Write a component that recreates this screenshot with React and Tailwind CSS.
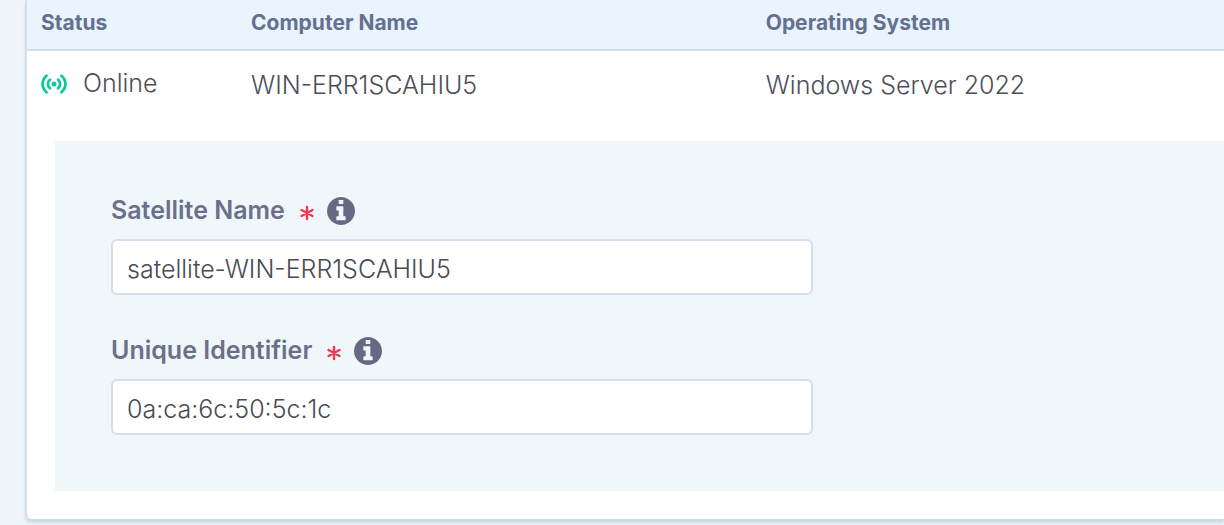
import { useState } from 'react'

const satellite = {
  status: 'Online',
  computerName: 'WIN-ERR1SCAHIU5',
  os: 'Windows Server 2022',
}

function OnlineIcon() {
  return (
    <svg
      viewBox="0 0 26 20"
      className="h-5 w-[26px] shrink-0 text-[#10c99a]"
      fill="none"
      stroke="currentColor"
      strokeWidth="2.8"
      strokeLinecap="round"
      aria-hidden="true"
    >
      <path d="M5.5 1.8C.3 6.4.3 13.6 5.5 18.2" />
      <path d="M8.9 5.8C6.2 8.4 6.2 11.6 8.9 14.2" />
      <path d="M17.1 5.8c2.7 2.6 2.7 5.8 0 8.4" />
      <path d="M20.5 1.8c5.2 4.6 5.2 11.8 0 16.4" />
      <circle cx="13" cy="10" r="2.5" fill="currentColor" stroke="none" />
    </svg>
  )
}

function InfoIcon() {
  return (
    <svg viewBox="128 128 1536 1536" className="ml-3 size-7 text-[#646a84]" fill="currentColor" aria-hidden="true">
      <path d="M1152 1376v-160q0-14-9-23t-23-9h-96v-512q0-14-9-23t-23-9h-320q-14 0-23 9t-9 23v160q0 14 9 23t23 9h96v320h-96q-14 0-23 9t-9 23v160q0 14 9 23t23 9h448q14 0 23-9t9-23zm-128-896v-160q0-14-9-23t-23-9h-192q-14 0-23 9t-9 23v160q0 14 9 23t23 9h192q14 0 23-9t9-23zm640 416q0 209-103 385.5t-279.5 279.5-385.5 103-385.5-103-279.5-279.5-103-385.5 103-385.5 279.5-279.5 385.5-103 385.5 103 279.5 279.5 103 385.5z" />
    </svg>
  )
}

function RequiredMark() {
  return (
    <svg
      viewBox="0 0 16 16"
      className="mt-1 size-4 text-[#f5364f]"
      stroke="currentColor"
      strokeWidth="2.4"
      strokeLinecap="round"
      role="img"
      aria-label="required"
    >
      <path d="M8 2v12M2.5 5l11 6M13.5 5L2.5 11" />
    </svg>
  )
}

function Field({ id, label, value, onChange }) {
  return (
    <div>
      <div className="flex h-7 items-center">
        <label htmlFor={id} className="flex items-center gap-3.5 text-[25px] font-semibold text-[#6b7089]">
          {label}
          <RequiredMark />
        </label>
        <InfoIcon />
      </div>
      <input
        id={id}
        type="text"
        required
        value={value}
        onChange={(e) => onChange(e.target.value)}
        className="mt-3.5 block h-14 w-full max-w-[702px] rounded-md border-2 border-[#d5deea] bg-white px-3.5 pt-1 text-[25px] font-light text-[#484b52] outline-none"
      />
    </div>
  )
}

function App() {
  const [name, setName] = useState('satellite-WIN-ERR1SCAHIU5')
  const [identifier, setIdentifier] = useState('0a:ca:6c:50:5c:1c')

  return (
    <div className="overflow-hidden bg-[#f0f5fb] pb-1.5 pl-[25px] font-['Inter',sans-serif]">
      <div className="rounded-bl-md border-l-2 border-[#d3e0ec] bg-white pb-7 shadow-[0_4px_3px_#c9dbe3]">
        <table className="w-full table-fixed text-left">
          <thead>
            <tr className="h-[50px] border-b-2 border-[#d3e0ec] bg-[#e9f4fe] text-[21px] text-[#65708f]">
              <th className="w-[210px] px-3.5 pb-1 font-bold">Status</th>
              <th className="w-[43%] px-3.5 pb-1 font-bold">Computer Name</th>
              <th className="px-3.5 pb-1 font-bold">Operating System</th>
            </tr>
          </thead>
          <tbody>
            <tr className="h-[91px] text-[25px] font-light text-[#4c4f57]">
              <td className="px-3.5 pb-6">
                <div className="flex items-center gap-4">
                  <OnlineIcon />
                  {satellite.status}
                </div>
              </td>
              <td className="px-3.5 pb-5">{satellite.computerName}</td>
              <td className="px-3.5 pb-5">{satellite.os}</td>
            </tr>
            <tr>
              <td colSpan={3} className="pl-7">
                <div className="flex flex-col gap-[42px] bg-[#eff7fb] px-14 py-14">
                  <Field id="satellite-name" label="Satellite Name" value={name} onChange={setName} />
                  <Field id="unique-identifier" label="Unique Identifier" value={identifier} onChange={setIdentifier} />
                </div>
              </td>
            </tr>
          </tbody>
        </table>
      </div>
    </div>
  )
}

export default App
